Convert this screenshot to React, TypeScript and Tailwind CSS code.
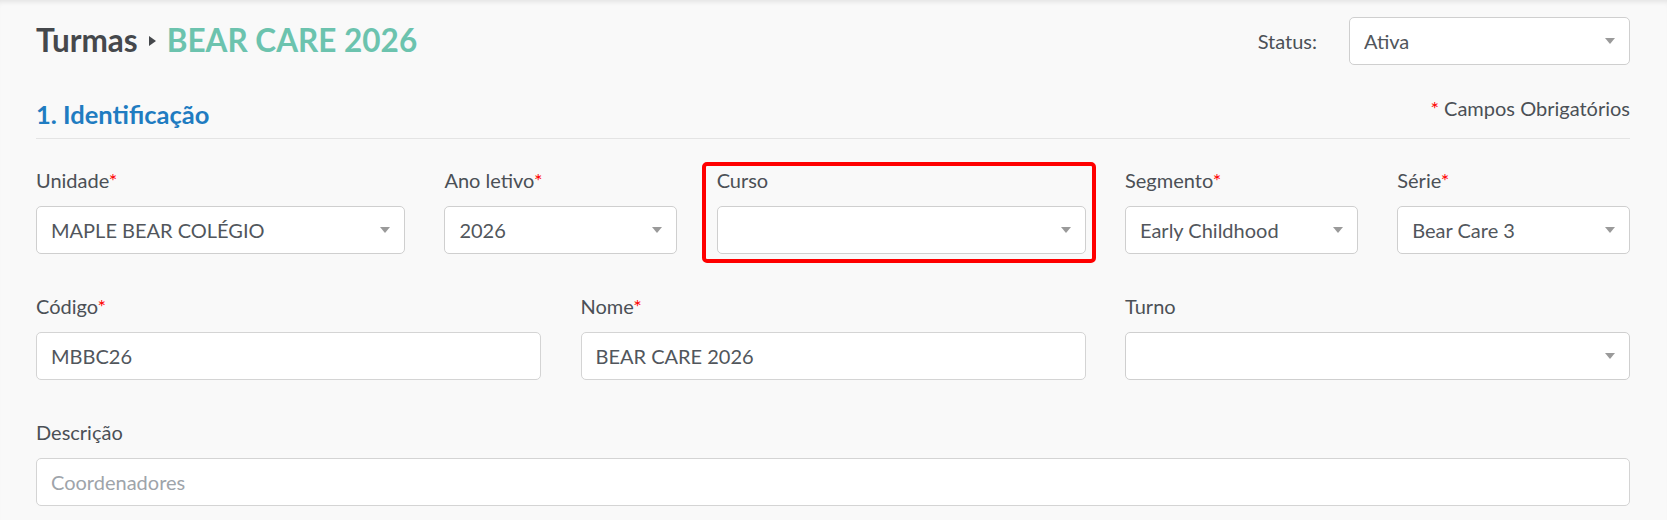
import React from 'react';

const font = { fontFamily: 'Lato, "Noto Sans", "Liberation Sans", sans-serif' };

function Arrow() {
  return (
    <svg width="10" height="6" viewBox="0 0 10 6" className="shrink-0">
      <path d="M0 0 L10 0 L5 6 Z" fill="#9a9a9a" />
    </svg>
  );
}

function Label({ text, required }: { text: string; required?: boolean }) {
  return (
    <div className="h-6 leading-6 text-[20px] text-[#4b5056] mb-[14px] whitespace-nowrap">
      {text}
      {required ? <span className="text-[#ff0000]">*</span> : null}
    </div>
  );
}

function Select({ value }: { value?: string }) {
  return (
    <div className="h-12 bg-white border border-[#cfcfcf] rounded-[5px] flex items-center justify-between pl-[14px] pr-[14px]">
      <span className="text-[20px] text-[#51565c] truncate">{value}</span>
      <Arrow />
    </div>
  );
}

function Input({ value, placeholder }: { value?: string; placeholder?: string }) {
  return (
    <div className="h-12 bg-white border border-[#d4d4d4] rounded-[5px] flex items-center px-[14px]">
      {value ? (
        <span className="text-[20px] text-[#51565c]">{value}</span>
      ) : (
        <span className="text-[20px] text-[#9ea4aa]">{placeholder}</span>
      )}
    </div>
  );
}

export default function App() {
  return (
    <div
      style={font}
      className="min-h-[520px] bg-[#f9f9f9] pl-9 pr-[37px] pt-[17px] shadow-[inset_0_5px_5px_-3px_rgba(0,0,0,0.09)]"
    >
      {/* topo */}
      <div className="flex items-center justify-between h-12">
        <div className="flex items-center gap-[11px] text-[31.5px] font-bold leading-none">
          <span className="text-[#45484c]">Turmas</span>
          <svg width="7" height="10" viewBox="0 0 7 10">
            <path d="M0 0 L7 5 L0 10 Z" fill="#45484c" />
          </svg>
          <span className="text-[#6cc3ae]">BEAR CARE 2026</span>
        </div>
        <div className="flex items-center gap-8">
          <span className="text-[20px] text-[#4b5056]">Status:</span>
          <div className="w-[281px]">
            <Select value="Ativa" />
          </div>
        </div>
      </div>

      {/* identificação */}
      <div className="flex items-start justify-between mt-[31px] pb-2 border-b border-[#e4e4e4]">
        <h2 className="text-[25.5px] leading-8 font-bold text-[#1f7cc1] pt-[2px]">1. Identificação</h2>
        <div className="text-[20px] leading-6 text-[#4b5056]">
          <span className="text-[#ff0000]">*</span> Campos Obrigatórios
        </div>
      </div>

      <div className="grid grid-cols-12 gap-x-[39.5px] gap-y-10 mt-[29px]">
        <div className="col-span-3">
          <Label text="Unidade" required />
          <Select value="MAPLE BEAR COLÉGIO" />
        </div>
        <div className="col-span-2">
          <Label text="Ano letivo" required />
          <Select value="2026" />
        </div>
        <div className="col-span-3 relative">
          <div className="absolute left-[-15px] right-[-10px] top-[-6px] bottom-[-9px] border-4 border-[#ff0000] rounded-[5px]" />
          <Label text="Curso" />
          <Select />
        </div>
        <div className="col-span-2">
          <Label text="Segmento" required />
          <Select value="Early Childhood" />
        </div>
        <div className="col-span-2">
          <Label text="Série" required />
          <Select value="Bear Care 3" />
        </div>

        <div className="col-span-4">
          <Label text="Código" required />
          <Input value="MBBC26" />
        </div>
        <div className="col-span-4">
          <Label text="Nome" required />
          <Input value="BEAR CARE 2026" />
        </div>
        <div className="col-span-4">
          <Label text="Turno" />
          <Select />
        </div>

        <div className="col-span-12">
          <Label text="Descrição" />
          <Input placeholder="Coordenadores" />
        </div>
      </div>
    </div>
  );
}
